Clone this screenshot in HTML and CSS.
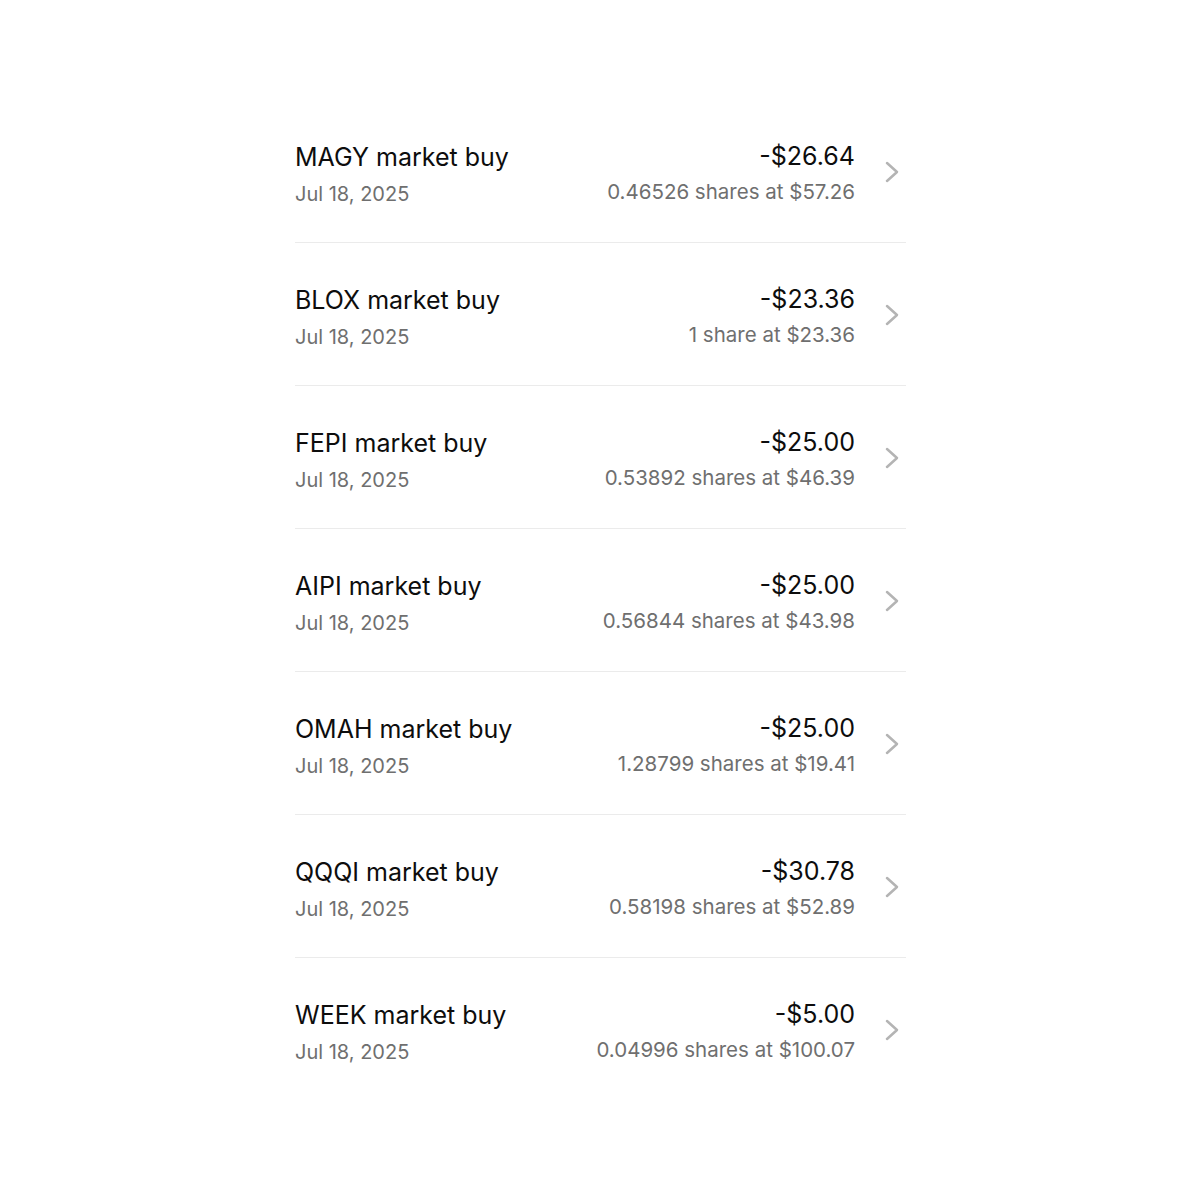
FILE: index.html
```html
<!DOCTYPE html>
<html>
<head>
<meta charset="utf-8">
<link rel="stylesheet" href="styles.css">
</head>
<body>
<div class="list">
  <div class="row">
    <div class="left"><div class="title">MAGY market buy</div><div class="date">Jul 18, 2025</div></div>
    <div class="right"><div class="amount">-$26.64</div><div class="sub">0.46526 shares at $57.26</div></div>
    <svg class="chev" viewBox="0 0 14 22"><path d="M2 2 L12 11 L2 20" /></svg>
  </div>
  <div class="row">
    <div class="left"><div class="title">BLOX market buy</div><div class="date">Jul 18, 2025</div></div>
    <div class="right"><div class="amount">-$23.36</div><div class="sub">1 share at $23.36</div></div>
    <svg class="chev" viewBox="0 0 14 22"><path d="M2 2 L12 11 L2 20" /></svg>
  </div>
  <div class="row">
    <div class="left"><div class="title">FEPI market buy</div><div class="date">Jul 18, 2025</div></div>
    <div class="right"><div class="amount">-$25.00</div><div class="sub">0.53892 shares at $46.39</div></div>
    <svg class="chev" viewBox="0 0 14 22"><path d="M2 2 L12 11 L2 20" /></svg>
  </div>
  <div class="row">
    <div class="left"><div class="title">AIPI market buy</div><div class="date">Jul 18, 2025</div></div>
    <div class="right"><div class="amount">-$25.00</div><div class="sub">0.56844 shares at $43.98</div></div>
    <svg class="chev" viewBox="0 0 14 22"><path d="M2 2 L12 11 L2 20" /></svg>
  </div>
  <div class="row">
    <div class="left"><div class="title">OMAH market buy</div><div class="date">Jul 18, 2025</div></div>
    <div class="right"><div class="amount">-$25.00</div><div class="sub">1.28799 shares at $19.41</div></div>
    <svg class="chev" viewBox="0 0 14 22"><path d="M2 2 L12 11 L2 20" /></svg>
  </div>
  <div class="row">
    <div class="left"><div class="title">QQQI market buy</div><div class="date">Jul 18, 2025</div></div>
    <div class="right"><div class="amount">-$30.78</div><div class="sub">0.58198 shares at $52.89</div></div>
    <svg class="chev" viewBox="0 0 14 22"><path d="M2 2 L12 11 L2 20" /></svg>
  </div>
  <div class="row">
    <div class="left"><div class="title">WEEK market buy</div><div class="date">Jul 18, 2025</div></div>
    <div class="right"><div class="amount">-$5.00</div><div class="sub">0.04996 shares at $100.07</div></div>
    <svg class="chev" viewBox="0 0 14 22"><path d="M2 2 L12 11 L2 20" /></svg>
  </div>
</div>
</body>
</html>
```

FILE: styles.css
```css
html, body {
  margin: 0;
  padding: 0;
  background: #ffffff;
}
body {
  font-family: Inter, "Noto Sans", sans-serif;
  color: #0d0d0d;
}
.list {
  width: 611px;
  margin: 100px 0 0 295px;
}
.row {
  display: flex;
  align-items: flex-start;
  height: 142px;
  border-bottom: 1px solid #ebebeb;
}
.row:last-child {
  border-bottom: none;
}
.left {
  flex: 1;
  padding-top: 42px;
}
.title {
  font-size: 25px;
  line-height: 30px;
  color: #0d0d0d;
}
.date {
  margin-top: 9px;
  font-size: 20px;
  line-height: 26px;
  color: #6f6f6f;
}
.right {
  padding-top: 41px;
  text-align: right;
}
.amount {
  font-size: 25px;
  line-height: 30px;
  color: #0d0d0d;
}
.sub {
  margin-top: 8px;
  font-size: 20.5px;
  line-height: 26px;
  color: #6f6f6f;
}
.chev {
  width: 14px;
  height: 22px;
  margin: 61px 7px 0 30px;
  fill: none;
  stroke: #b4b4b4;
  stroke-width: 2.5;
  stroke-linecap: round;
  stroke-linejoin: round;
}
```
